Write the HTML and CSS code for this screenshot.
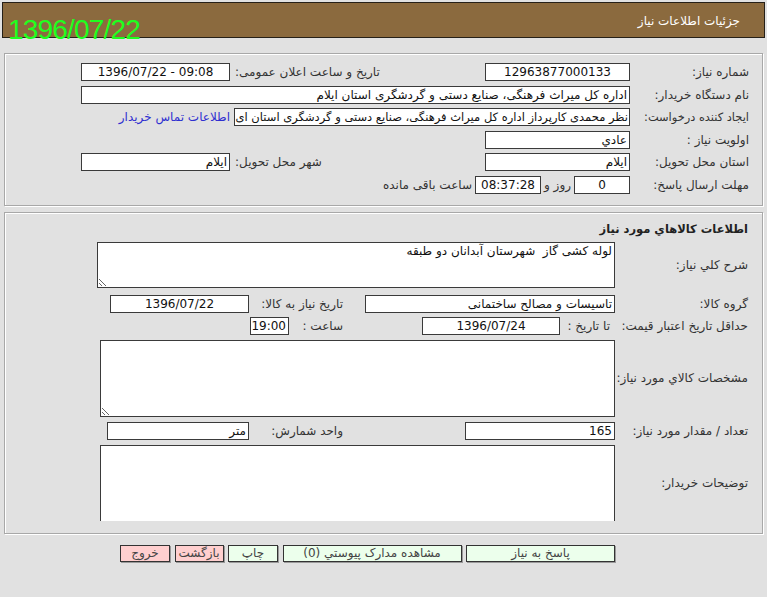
FILE: index.html
```html
<!DOCTYPE html>
<html lang="fa" dir="rtl">
<head>
<meta charset="utf-8">
<title>جزئیات اطلاعات نیاز</title>
<link rel="stylesheet" href="styles.css">
</head>
<body>
<div class="header">
  <div class="header-title">جزئیات اطلاعات نیاز</div>
</div>
<div class="stamp">1396/07/22</div>

<div class="panel panel-info">
  <div class="row">
    <div class="lbl">شماره نیاز:</div>
    <div class="fld w145 center">12963877000133</div>
    <div class="lbl2 w255">تاریخ و ساعت اعلان عمومی:</div>
    <div class="fld w149 center ltr">1396/07/22 - 09:08</div>
  </div>
  <div class="row">
    <div class="lbl">نام دستگاه خریدار:</div>
    <div class="fld w549">اداره کل میراث فرهنگی، صنایع دستی و گردشگری استان ایلام</div>
  </div>
  <div class="row">
    <div class="lbl lbl-tight">ایجاد کننده درخواست:</div>
    <div class="fld w396 fld-tight">نظر محمدی کارپرداز اداره کل میراث فرهنگی، صنایع دستی و گردشگری استان ای</div>
    <a class="link" href="#">اطلاعات تماس خریدار</a>
  </div>
  <div class="row">
    <div class="lbl">اولویت نیاز :</div>
    <div class="fld w145">عادي</div>
  </div>
  <div class="row">
    <div class="lbl">استان محل تحویل:</div>
    <div class="fld w145">ایلام</div>
    <div class="lbl2 w255">شهر محل تحویل:</div>
    <div class="fld w149">ایلام</div>
  </div>
  <div class="row">
    <div class="lbl">مهلت ارسال پاسخ:</div>
    <div class="fld w56 center">0</div>
    <div class="txt">روز و</div>
    <div class="fld w66 center">08:37:28</div>
    <div class="txt">ساعت باقی مانده</div>
  </div>
</div>

<div class="panel panel-goods">
  <div class="clip">
    <div class="heading">اطلاعات کالاهاي مورد نياز</div>
    <div class="row row-ta1">
      <div class="lbl lbl-wide">شرح کلي نياز:</div>
      <textarea class="ta ta1" readonly>لوله کشی گاز  شهرستان آبدانان دو طبقه</textarea>
    </div>
    <div class="row row-gap4">
      <div class="lbl lbl-wide">گروه کالا:</div>
      <div class="colb"><div class="fld w250">تاسیسات و مصالح ساختمانی</div></div>
      <div class="lblc">تاریخ نیاز به کالا:</div>
      <div class="fld w139 center">1396/07/22</div>
    </div>
    <div class="row row-gap5">
      <div class="lbl lbl-wide">حداقل تاریخ اعتبار قیمت:</div>
      <div class="colb">
        <div class="txt-to">تا تاریخ :</div>
        <div class="fld w138 center">1396/07/24</div>
      </div>
      <div class="lblc lblc-short">ساعت :</div>
      <div class="fld w39 center">19:00</div>
    </div>
    <div class="row row-ta2">
      <div class="lbl lbl-wide">مشخصات کالاي مورد نياز:</div>
      <textarea class="ta ta2" readonly></textarea>
    </div>
    <div class="row row-gap5">
      <div class="lbl lbl-wide">تعداد / مقدار مورد نیاز:</div>
      <div class="colb"><div class="fld w150">165</div></div>
      <div class="lblc">واحد شمارش:</div>
      <div class="fld w142">متر</div>
    </div>
    <div class="row row-ta3">
      <div class="lbl lbl-wide">توضیحات خریدار:</div>
      <textarea class="ta ta3" readonly></textarea>
    </div>
  </div>
</div>

<div class="buttons">
  <button class="btn btn-go w149">پاسخ به نیاز</button>
  <button class="btn btn-go w179">مشاهده مدارک پیوستي (0)</button>
  <button class="btn btn-go w50">چاپ</button>
  <button class="btn btn-stop w49">بازگشت</button>
  <button class="btn btn-stop w50">خروج</button>
</div>
</body>
</html>
```

FILE: styles.css
```css
* { box-sizing: border-box; }

html, body {
  margin: 0;
  padding: 0;
  background: #e1e1e1;
}

body {
  direction: rtl;
  font-family: "DejaVu Sans", sans-serif;
  font-size: 12px;
  color: #333;
  position: relative;
  height: 597px;
  overflow: hidden;
}

.header {
  margin: 2px 2px 0 2px;
  height: 36px;
  background: #8b6a3e;
  border: 1px solid #262018;
  display: flex;
  align-items: center;
  padding-right: 24px;
  padding-top: 2px;
}

.header-title {
  color: #fff;
  font-size: 12px;
}

.stamp {
  position: absolute;
  top: 16px;
  left: 8px;
  direction: ltr;
  font-family: "Liberation Sans", sans-serif;
  font-size: 28px;
  line-height: 1;
  color: #1eff1e;
  letter-spacing: -0.8px;
}

.panel {
  margin: 0 4px 0 4px;
  border: 1px solid #a8a8a8;
  box-shadow: inset 1px 1px 0 #fff, 1px 1px 0 #fff;
}

.panel-info {
  margin-top: 15px;
  padding: 9px 13px 11px 0;
  display: flex;
  flex-direction: column;
  gap: 4.6px;
}

.panel-goods {
  margin-top: 6px;
  padding: 8px 0 12px 0;
}

.clip {
  height: 300px;
  overflow: hidden;
}

.row {
  display: flex;
  align-items: center;
  height: 18px;
}

.lbl {
  width: 119px;
  flex: none;
  white-space: nowrap;
}

.lbl-tight {
  font-size: 11.4px;
  letter-spacing: -0.2px;
}

.lbl-wide {
  width: 133px;
  margin-right: 14px;
}

.lbl2 {
  flex: none;
  text-align: left;
  padding-left: 5px;
  white-space: nowrap;
}

.fld {
  flex: none;
  height: 18px;
  background: #fff;
  border: 1px solid #3a3a3a;
  color: #111;
  line-height: 16px;
  padding: 0 2px;
  white-space: nowrap;
  overflow: hidden;
}

.fld-tight {
  font-size: 11.5px;
  padding: 0 1px;
}

.center { text-align: center; }
.ltr { direction: ltr; }

.w39 { width: 39px; }
.w49 { width: 49px; }
.w50 { width: 50px; }
.w56 { width: 56px; }
.w66 { width: 66px; }
.w138 { width: 138px; }
.w139 { width: 139px; }
.w142 { width: 142px; }
.w145 { width: 145px; }
.w149 { width: 149px; }
.w150 { width: 150px; }
.w179 { width: 179px; }
.w250 { width: 250px; }
.w255 { width: 255px; }
.w396 { width: 396px; }
.w549 { width: 549px; }

.txt {
  flex: none;
  margin: 0 3px;
  white-space: nowrap;
}

.link {
  margin-right: 4px;
  color: #2f2fd0;
  text-decoration: none;
  white-space: nowrap;
}

.heading {
  font-weight: bold;
  font-size: 11.5px;
  color: #222;
  height: 16px;
  line-height: 16px;
  padding-right: 14px;
  margin-bottom: 5px;
}

.row-ta1 { height: 46px; margin-bottom: 7px; }
.row-gap4 { margin-bottom: 4px; }
.row-gap5 { margin-bottom: 5px; }
.row-ta2 { height: 77px; margin-bottom: 5px; }
.row-ta3 { height: 90px; align-items: flex-start; }
.row-ta3 .lbl { margin-top: 31px; }

.colb {
  width: 250px;
  flex: none;
  display: flex;
  align-items: center;
}

.txt-to {
  width: 55px;
  padding-right: 5px;
  white-space: nowrap;
}

.lblc {
  width: 116px;
  flex: none;
  padding-right: 22px;
  white-space: nowrap;
}

.lblc-short { width: 76px; }

.ta {
  flex: none;
  display: block;
  margin: 0;
  background: #fff;
  border: 1px solid #3a3a3a;
  font-family: "DejaVu Sans", sans-serif;
  font-size: 12px;
  color: #111;
  padding: 1px 2px;
  direction: rtl;
}

.ta1 { width: 518px; height: 46px; }
.ta2 { width: 515px; height: 77px; }
.ta3 { width: 515px; height: 90px; }

.buttons {
  display: flex;
  gap: 4.5px;
  margin: 11px 152px 0 0;
}

.btn {
  height: 17px;
  padding: 0;
  border: 1px solid #333;
  box-shadow: 1px 1px 0 #9a9a9a;
  font-family: "DejaVu Sans", sans-serif;
  font-size: 12px;
  color: #444;
  line-height: 15px;
  text-align: center;
}

.btn-go { background: #ecffec; }
.btn-stop { background: #ffcfcf; }
```
